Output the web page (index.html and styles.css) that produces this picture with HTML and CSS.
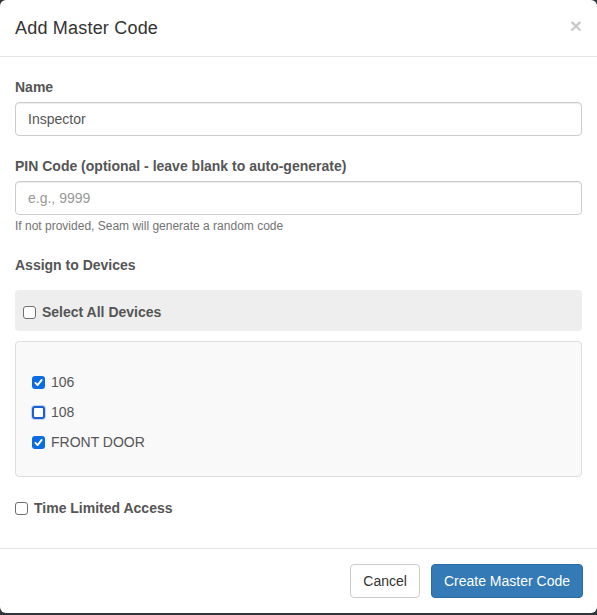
FILE: index.html
```html
<!DOCTYPE html>
<html>
<head>
<meta charset="utf-8">
<link rel="stylesheet" href="styles.css">
</head>
<body>
<div class="modal">
  <div class="modal-header">
    <h4 class="modal-title">Add Master Code</h4>
    <button class="close" type="button">×</button>
  </div>
  <div class="modal-body">
    <div class="form-group">
      <label class="control-label">Name</label>
      <div class="form-control">Inspector</div>
    </div>
    <div class="form-group">
      <label class="control-label">PIN Code (optional - leave blank to auto-generate)</label>
      <div class="form-control placeholder">e.g., 9999</div>
      <p class="help-block">If not provided, Seam will generate a random code</p>
    </div>
    <div class="form-group last">
      <label class="control-label devices-label">Assign to Devices</label>
      <div class="select-all">
        <div class="check bold"><span class="box"></span><span>Select All Devices</span></div>
      </div>
      <div class="device-list">
        <div class="check"><span class="box checked"><svg viewBox="0 0 13 13" width="13" height="13"><path d="M3.4 6.9 L5.6 9.1 L9.7 3.9" fill="none" stroke="#fff" stroke-width="1.9" stroke-linecap="round" stroke-linejoin="round"/></svg></span><span>106</span></div>
        <div class="check"><span class="box focus"></span><span>108</span></div>
        <div class="check"><span class="box checked"><svg viewBox="0 0 13 13" width="13" height="13"><path d="M3.4 6.9 L5.6 9.1 L9.7 3.9" fill="none" stroke="#fff" stroke-width="1.9" stroke-linecap="round" stroke-linejoin="round"/></svg></span><span>FRONT DOOR</span></div>
      </div>
    </div>
    <div class="check bold time"><span class="box"></span><span>Time Limited Access</span></div>
  </div>
  <div class="modal-footer">
    <button class="btn btn-default" type="button">Cancel</button>
    <button class="btn btn-primary" type="button">Create Master Code</button>
  </div>
</div>
</body>
</html>
```
FILE: styles.css
```css
html, body {
  margin: 0;
  padding: 0;
}
body {
  background: #30353c;
  font-family: "Liberation Sans", Arial, sans-serif;
  font-size: 14px;
  line-height: 20px;
  color: #333;
  height: 615px;
}
.modal {
  background: #fff;
  border-radius: 6px;
  width: 597px;
  overflow: hidden;
}
.modal-header {
  display: flex;
  align-items: flex-start;
  justify-content: space-between;
  padding: 15px 15px 15px 15px;
  border-bottom: 1px solid #e5e5e5;
}
.modal-title {
  margin: 0;
  font-size: 18px;
  line-height: 26px;
  font-weight: 500;
  color: #333;
  letter-spacing: 0.2px;
}
.close {
  border: 0;
  background: transparent;
  padding: 0;
  margin-top: 0;
  font-family: "Liberation Sans", Arial, sans-serif;
  font-size: 21px;
  font-weight: bold;
  line-height: 21px;
  color: #000;
  opacity: 0.2;
}
.modal-body {
  padding: 20px 15px 30px 15px;
}
.form-group {
  margin-bottom: 20px;
}
.form-group.last {
  margin-bottom: 21px;
}
.control-label {
  display: block;
  font-weight: bold;
  color: #555;
  margin-bottom: 5px;
}
.devices-label {
  margin-bottom: 15px;
}
.form-control {
  box-sizing: border-box;
  height: 34px;
  padding: 6px 12px;
  border: 1px solid #ccc;
  border-radius: 4px;
  color: #555;
  background: #fff;
  box-shadow: inset 0 1px 1px rgba(0,0,0,0.075);
}
.form-control.placeholder {
  color: #999;
}
.help-block {
  margin: 3px 0 0 0;
  font-size: 12px;
  line-height: 17px;
  color: #737373;
}
.select-all {
  background: #eee;
  border-radius: 4px;
  padding: 12px 8px 8px 8px;
  margin-bottom: 10px;
}
.select-all .check {
  line-height: 21px;
}
.device-list {
  background: #f9f9f9;
  border: 1px solid #ddd;
  border-radius: 4px;
  padding: 30px 16px 24px 16px;
  display: flex;
  flex-direction: column;
  gap: 10px;
}
.check {
  display: flex;
  align-items: center;
  gap: 6px;
  color: #555;
  line-height: 20px;
}
.check.bold {
  font-weight: bold;
}
.box {
  box-sizing: border-box;
  width: 13px;
  height: 13px;
  flex: none;
  border: 1px solid #6f6f6f;
  border-radius: 3px;
  background: #fff;
  display: block;
}
.box svg {
  display: block;
}
.box.checked {
  border: 0;
  background: #0b6be0;
}
.box.focus {
  border: 2px solid #1a5fcf;
  border-radius: 3px;
  box-shadow: 0 0 0 1px rgba(90, 140, 220, 0.35);
}
.modal-footer {
  border-top: 1px solid #e5e5e5;
  padding: 15px 14px 15px 15px;
  display: flex;
  justify-content: flex-end;
  gap: 11px;
}
.btn {
  box-sizing: border-box;
  height: 34px;
  padding: 6px 12px;
  font-family: "Liberation Sans", Arial, sans-serif;
  font-size: 14px;
  line-height: 20px;
  border-radius: 4px;
  border: 1px solid transparent;
}
.btn-default {
  background: #fff;
  border-color: #ccc;
  color: #333;
}
.btn-primary {
  background: #337ab7;
  border-color: #2e6da4;
  color: #fff;
}
```
